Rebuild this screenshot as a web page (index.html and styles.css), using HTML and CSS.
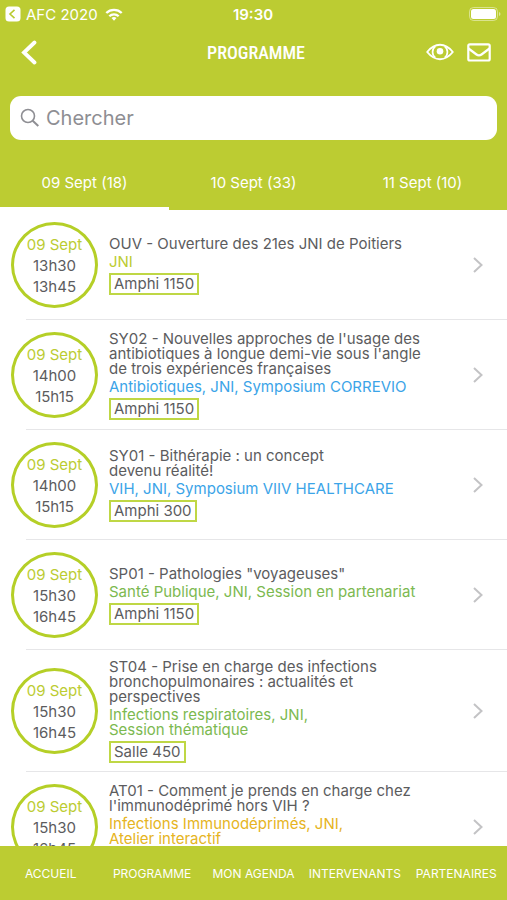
FILE: index.html
```html
<!DOCTYPE html>
<html lang="fr">
<head>
  <meta charset="UTF-8" />
  <meta name="viewport" content="width=device-width, initial-scale=1.0"/>
  <title>Programme</title>
  <link rel="stylesheet" href="styles.css">
</head>
<body>

  <header class="header">
    <!-- Status bar -->
    <div class="status">
      <div class="status-left">
        <svg width="16" height="16" viewBox="0 0 16 16"><rect x="0.5" y="0.5" width="15" height="15" rx="3.5" fill="#fff"/><path d="M9.5 3.8 5 8l4.500 4.200" fill="none" stroke="#b9cb30" stroke-width="1.600"/></svg>
        <span>AFC 2020</span>
        <svg class="wifi" width="18" height="13" viewBox="0 0 18 13"><g fill="none" stroke="#fff" stroke-width="2.300"><path d="M1.300 5a11 11 0 0 1 15.400 0"/><path d="M4.300 8.300a6.700 6.700 0 0 1 9.400 0"/></g><path d="M6.500 10.100a3.600 3.600 0 0 1 5 0L9 12.700z" fill="#fff"/></svg>
      </div>
      <time class="clock">19:30</time>
      <div class="status-right">
        <svg width="32" height="14" viewBox="0 0 32 14"><rect x="0.5" y="0.5" width="28" height="13" rx="4" fill="none" stroke="#fff" stroke-opacity="0.45"/><rect x="2" y="2" width="25" height="10" rx="2.500" fill="#fff"/><path d="M30 5v4q1.500-.5 1.500-2T30 5z" fill="#fff" fill-opacity="0.5"/></svg>
      </div>
    </div>

    <!-- Navigation bar -->
    <div class="navbar">
      <button class="icon-btn" type="button" aria-label="Retour">
        <svg width="16" height="25" viewBox="0 0 16 25"><path d="M13.500 2.500 3 12.500l10.500 10" fill="none" stroke="#fff" stroke-width="3.800" stroke-linecap="round"/></svg>
      </button>
      <h1>PROGRAMME</h1>
      <div class="actions">
        <button class="icon-btn" type="button" aria-label="Afficher">
          <svg width="28" height="18" viewBox="0 0 28 18"><g fill="none" stroke="#fff"><path d="M1.200 9Q7 1.800 14 1.800T26.800 9Q21 16.200 14 16.200T1.200 9z" stroke-width="1.900" stroke-linejoin="round"/><path d="M9.300 3.300a7.300 7.300 0 0 0 0 11.400M18.700 3.300a7.300 7.300 0 0 1 0 11.400" stroke-width="1.700"/></g><circle cx="14" cy="8.200" r="3.300" fill="#fff"/></svg>
        </button>
        <button class="icon-btn" type="button" aria-label="Messages">
          <svg width="24" height="19" viewBox="0 0 24 19"><g fill="none" stroke="#fff" stroke-width="2.200" stroke-linejoin="round"><rect x="1.300" y="1.300" width="21.400" height="16.200" rx="1.500"/><path d="M1.500 5.500 9.500 11.500q2.500 1.800 5 0l8-6"/></g></svg>
        </button>
      </div>
    </div>

    <form class="search">
      <svg width="20" height="20" viewBox="0 0 20 20"><g fill="none" stroke="#8e8e93" stroke-width="1.600"><circle cx="8" cy="8" r="6.500"/><path d="m12.700 12.700 5.600 5.300" stroke-width="2"/></g></svg>
      <input type="search" placeholder="Chercher" aria-label="Chercher">
    </form>

    <nav class="tabs">
      <button class="tab active" type="button">09 Sept (18)</button>
      <button class="tab" type="button">10 Sept (33)</button>
      <button class="tab" type="button">11 Sept (10)</button>
    </nav>
  </header>

  <!-- Sessions -->
  <main class="list">
    <a class="session" href="#ouv">
      <div class="slot"><span class="day">09 Sept</span><span>13h30</span><span>13h45</span></div>
      <div class="info">
        <h2>OUV - Ouverture des 21es JNI de Poitiers</h2>
        <p class="tags lime">JNI</p>
        <span class="room">Amphi 1150</span>
      </div>
      <svg class="chevron" viewBox="0 0 10 16"><path d="m1 1 7.500 7L1 15"/></svg>
    </a>
    <a class="session" href="#sy02">
      <div class="slot"><span class="day">09 Sept</span><span>14h00</span><span>15h15</span></div>
      <div class="info">
        <h2>SY02 - Nouvelles approches de l'usage des<br>antibiotiques à longue demi-vie sous l'angle<br>de trois expériences françaises</h2>
        <p class="tags blue">Antibiotiques, JNI, Symposium CORREVIO</p>
        <span class="room">Amphi 1150</span>
      </div>
      <svg class="chevron" viewBox="0 0 10 16"><path d="m1 1 7.500 7L1 15"/></svg>
    </a>
    <a class="session" href="#sy01">
      <div class="slot"><span class="day">09 Sept</span><span>14h00</span><span>15h15</span></div>
      <div class="info">
        <h2>SY01 - Bithérapie : un concept<br>devenu réalité!</h2>
        <p class="tags blue">VIH, JNI, Symposium VIIV HEALTHCARE</p>
        <span class="room">Amphi 300</span>
      </div>
      <svg class="chevron" viewBox="0 0 10 16"><path d="m1 1 7.500 7L1 15"/></svg>
    </a>
    <a class="session" href="#sp01">
      <div class="slot"><span class="day">09 Sept</span><span>15h30</span><span>16h45</span></div>
      <div class="info">
        <h2>SP01 - Pathologies "voyageuses"</h2>
        <p class="tags green">Santé Publique, JNI, Session en partenariat</p>
        <span class="room">Amphi 1150</span>
      </div>
      <svg class="chevron" viewBox="0 0 10 16"><path d="m1 1 7.500 7L1 15"/></svg>
    </a>
    <a class="session" href="#st04">
      <div class="slot"><span class="day">09 Sept</span><span>15h30</span><span>16h45</span></div>
      <div class="info">
        <h2>ST04 - Prise en charge des infections<br>bronchopulmonaires : actualités et<br>perspectives</h2>
        <p class="tags green">Infections respiratoires, JNI,<br>Session thématique</p>
        <span class="room">Salle 450</span>
      </div>
      <svg class="chevron" viewBox="0 0 10 16"><path d="m1 1 7.500 7L1 15"/></svg>
    </a>
    <a class="session" href="#at01">
      <div class="slot"><span class="day">09 Sept</span><span>15h30</span><span>16h45</span></div>
      <div class="info">
        <h2>AT01 - Comment je prends en charge chez<br>l'immunodéprimé hors VIH ?</h2>
        <p class="tags yellow">Infections Immunodéprimés, JNI,<br>Atelier interactif</p>
        <span class="room"></span>
      </div>
      <svg class="chevron" viewBox="0 0 10 16"><path d="m1 1 7.500 7L1 15"/></svg>
    </a>
  </main>

  <nav class="bottom-nav">
    <a href="#accueil">ACCUEIL</a>
    <a href="#programme">PROGRAMME</a>
    <a href="#agenda">MON AGENDA</a>
    <a href="#intervenants">INTERVENANTS</a>
    <a href="#partenaires">PARTENAIRES</a>
  </nav>

</body>
</html>
```
FILE: styles.css
```css
* { margin: 0; padding: 0; box-sizing: border-box; }
body {
  font-family: Inter, "Open Sans", sans-serif;
  height: 100vh;
  display: flex;
  flex-direction: column;
  background: #fff;
  color: #5c5c5e;
}
a { color: inherit; text-decoration: none; }
button {
  font: inherit;
  color: inherit;
  background: none;
  border: none;
  cursor: pointer;
}
svg { display: block; flex: none; }

/* Header */
.header {
  flex: none;
  background: #bccc32;
  color: #fff;
}
.status {
  display: grid;
  grid-template-columns: 1fr auto 1fr;
  align-items: center;
  height: 28px;
  padding: 0 6px 0 5px;
  font-size: 15px;
}
.status-left {
  display: flex;
  align-items: center;
  gap: 5px;
}
.wifi { margin-left: 2px; }
.clock { font-weight: 600; }
.status-right { justify-self: end; }

.navbar {
  display: grid;
  grid-template-columns: 1fr auto 1fr;
  align-items: center;
  height: 48px;
  padding: 0 16px 0 21px;
}
.navbar h1 {
  font-family: "Roboto Condensed", "Liberation Sans Narrow", sans-serif;
  font-size: 18px;
  font-weight: 500;
}
.icon-btn { justify-self: start; }
.actions {
  display: flex;
  align-items: center;
  justify-self: end;
  gap: 13px;
}

.search {
  display: flex;
  align-items: center;
  gap: 6px;
  height: 44px;
  margin: 20px 10px 0;
  padding: 0 10px;
  background: #fff;
  border-radius: 11px;
}
.search input {
  flex: 1;
  min-width: 0;
  border: none;
  outline: none;
  background: none;
  font: 20px Inter, sans-serif;
  color: #5c5c5e;
}
.search input::placeholder { color: #8e8e93; }

/* Day tabs */
.tabs {
  display: flex;
  height: 70px;
  padding-top: 18px;
}
.tab {
  flex: 1;
  font-size: 15px;
  border-bottom: 3px solid transparent;
}
.tab.active { border-bottom-color: #fff; }

/* Session list */
.list {
  flex: 1;
  min-height: 0;
  overflow-y: auto;
  scrollbar-width: none;
}
.session {
  display: flex;
  align-items: center;
  min-height: 110px;
  padding: 9px 24px 9px 11px;
  background: linear-gradient(#e6e6e8, #e6e6e8) 26px 100% / 100% 1px no-repeat;
}
.slot {
  flex: none;
  display: flex;
  flex-direction: column;
  align-items: center;
  justify-content: center;
  width: 87px;
  height: 86px;
  margin-right: 11px;
  border: 3px solid #b5cf27;
  border-radius: 50%;
  font-size: 15px;
  line-height: 21px;
}
.day { color: #bccc32; }
.info {
  flex: 1;
  min-width: 0;
}
.info h2 {
  font-size: 15px;
  font-weight: 400;
  line-height: 15px;
}
.tags {
  margin: 3px 0 4px;
  font-size: 15px;
  line-height: 15px;
}
.lime { color: #bccc32; }
.blue { color: #3ba4e8; }
.green { color: #7cb950; }
.yellow { color: #e6b422; }
.room {
  display: block;
  width: fit-content;
  min-height: 22px;
  padding: 0 3px;
  border: 2px solid #bfd745;
  font-size: 15px;
  line-height: 18px;
}
.chevron {
  width: 10px;
  height: 16px;
  fill: none;
  stroke: #c3c3c5;
  stroke-width: 2;
}

/* Bottom navigation */
.bottom-nav {
  flex: none;
  display: grid;
  grid-template-columns: repeat(5, 1fr);
  height: 54px;
  background: #bccc32;
  color: #fff;
  font-size: 12px;
}
.bottom-nav a {
  display: flex;
  align-items: center;
  justify-content: center;
}
```
